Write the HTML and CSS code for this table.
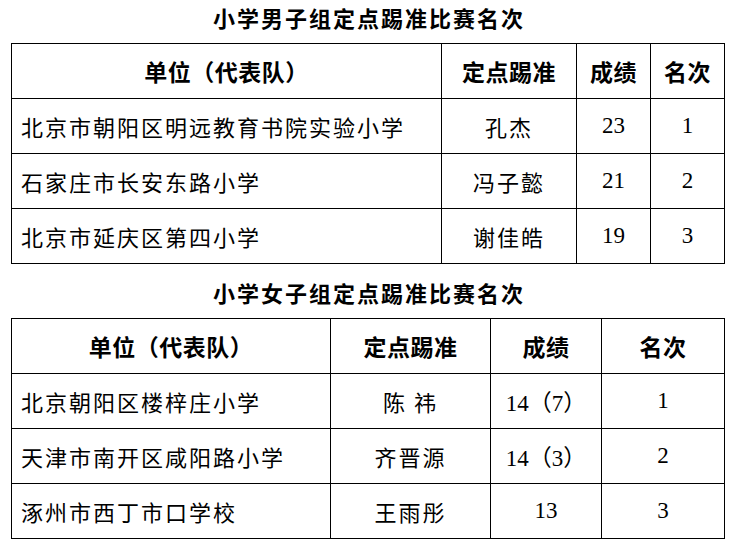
FILE: index.html
```html
<!DOCTYPE html>
<html lang="zh-CN">
<head>
<meta charset="utf-8">
<title>定点踢准比赛名次</title>
<link rel="stylesheet" href="styles.css">
</head>
<body>
<h2 class="title title-first">小学男子组定点踢准比赛名次</h2>
<table class="rank">
  <colgroup>
    <col class="c1a"><col class="c2a"><col class="c3a"><col class="c4a">
  </colgroup>
  <thead>
    <tr><th>单位（代表队）</th><th>定点踢准</th><th>成绩</th><th>名次</th></tr>
  </thead>
  <tbody>
    <tr><td class="unit">北京市朝阳区明远教育书院实验小学</td><td class="name">孔杰</td><td class="num">23</td><td class="num">1</td></tr>
    <tr><td class="unit">石家庄市长安东路小学</td><td class="name">冯子懿</td><td class="num">21</td><td class="num">2</td></tr>
    <tr><td class="unit">北京市延庆区第四小学</td><td class="name">谢佳皓</td><td class="num">19</td><td class="num">3</td></tr>
  </tbody>
</table>
<h2 class="title title-second">小学女子组定点踢准比赛名次</h2>
<table class="rank">
  <colgroup>
    <col class="c1b"><col class="c2b"><col class="c3b"><col class="c4b">
  </colgroup>
  <thead>
    <tr><th>单位（代表队）</th><th>定点踢准</th><th>成绩</th><th>名次</th></tr>
  </thead>
  <tbody>
    <tr><td class="unit">北京朝阳区楼梓庄小学</td><td class="name">陈 祎</td><td class="num">14（7）</td><td class="num">1</td></tr>
    <tr><td class="unit">天津市南开区咸阳路小学</td><td class="name">齐晋源</td><td class="num">14（3）</td><td class="num">2</td></tr>
    <tr><td class="unit">涿州市西丁市口学校</td><td class="name">王雨彤</td><td class="num">13</td><td class="num">3</td></tr>
  </tbody>
</table>
</body>
</html>
```
FILE: styles.css
```css
html, body {
  margin: 0;
  padding: 0;
  background: #ffffff;
  color: #000000;
  font-family: "Noto Sans CJK SC", "Noto Sans", sans-serif;
}

.title {
  margin: 0;
  padding-left: 4px;
  text-align: center;
  font-size: 22px;
  font-weight: 700;
  letter-spacing: 2px;
  line-height: 34px;
}

.title-first {
  margin-bottom: 9px;
}

.title-second {
  margin-top: 11px;
  margin-bottom: 9px;
}

.rank {
  margin-left: 11px;
  width: 713px;
  border-collapse: collapse;
  table-layout: fixed;
}

.rank th,
.rank td {
  border: 1.5px solid #000000;
  height: 54px;
  padding: 0;
  text-align: center;
  vertical-align: middle;
}

.rank th {
  font-size: 23px;
  font-weight: 700;
  letter-spacing: 0.5px;
}

.rank td {
  font-size: 22px;
  font-weight: 400;
}

.rank td.unit {
  text-align: left;
  padding-left: 9px;
  letter-spacing: 2px;
  white-space: nowrap;
}

.rank td.name {
  letter-spacing: 2px;
}

.rank td.num {
  font-family: "Liberation Serif", "Noto Sans CJK SC", serif;
  font-size: 23px;
}

.c1a { width: 430px; }
.c2a { width: 135px; }
.c3a { width: 74px; }
.c4a { width: 74px; }

.c1b { width: 319px; }
.c2b { width: 160px; }
.c3b { width: 111px; }
.c4b { width: 123px; }
```
